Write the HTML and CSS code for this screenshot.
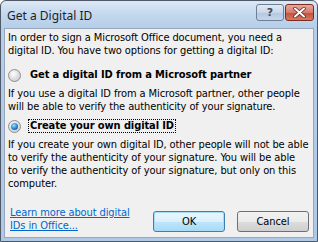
FILE: index.html
```html
<!DOCTYPE html>
<html lang="en">
<head>
    <meta charset="UTF-8">
    <title>Get a Digital ID</title>
    <link rel="stylesheet" href="styles.css">
</head>
<body>
    <div class="window">
        <div class="titlebar">
            <div class="title">Get a Digital ID</div>
            <div class="caption-buttons">
                <div class="cap-btn help">?</div>
                <div class="cap-btn close">
                    <svg width="13" height="11" viewBox="0 0 13 11">
                        <path d="M2 1.5 L11 9.5 M11 1.5 L2 9.5" stroke="#5a2020" stroke-width="3.4" stroke-linecap="round"/>
                        <path d="M2 1.5 L11 9.5 M11 1.5 L2 9.5" stroke="#ffffff" stroke-width="2" stroke-linecap="round"/>
                    </svg>
                </div>
            </div>
        </div>
        <div class="content">
            <p class="intro">In order to sign a Microsoft Office document, you need a<br>digital ID. You have two options for getting a digital ID:</p>

            <div class="option">
                <span class="radio"></span>
                <span class="option-label">Get a digital ID from a Microsoft partner</span>
            </div>
            <p class="desc">If you use a digital ID from a Microsoft partner, other people<br>will be able to verify the authenticity of your signature.</p>

            <div class="option">
                <span class="radio checked"></span>
                <span class="option-label focused">Create your own digital ID</span>
            </div>
            <p class="desc">If you create your own digital ID, other people will not be able<br>to verify the authenticity of your signature. You will be able<br>to verify the authenticity of your signature, but only on this<br>computer.</p>

            <div class="footer">
                <a class="learn" href="#">Learn more about digital<br>IDs in Office...</a>
                <div class="buttons">
                    <button class="btn default">OK</button>
                    <button class="btn">Cancel</button>
                </div>
            </div>
        </div>
    </div>
</body>
</html>
```

FILE: styles.css
```css
html, body {
    margin: 0;
    padding: 0;
    background: #ffffff;
}

.window {
    width: 318px;
    height: 242px;
    box-sizing: border-box;
    border: 1px solid #4e5866;
    border-radius: 6px 6px 0 0;
    background: linear-gradient(to bottom, #dce8f5 0px, #c2d7ee 14px, #b5cde8 28px, #aec8e6 100%);
    padding: 0 3px 3px 3px;
    display: flex;
    flex-direction: column;
    font-family: "DejaVu Sans Condensed", "DejaVu Sans", sans-serif;
    font-size: 11px;
    letter-spacing: -0.1px;
    color: #000000;
}

.titlebar {
    height: 27px;
    display: flex;
    justify-content: space-between;
    align-items: flex-start;
}

.title {
    font-family: "Noto Sans", sans-serif;
    font-size: 12px;
    letter-spacing: 0;
    padding: 6px 0 0 3px;
    color: #1e1e1e;
}

.caption-buttons {
    display: flex;
    gap: 1px;
    margin-top: 3px;
}

.cap-btn {
    height: 17px;
    box-sizing: border-box;
    border: 1px solid #6d7f95;
    border-radius: 3px;
    display: flex;
    align-items: center;
    justify-content: center;
}

.help {
    width: 28px;
    background: linear-gradient(to bottom, #e2ebf5 0%, #c8d7e8 50%, #b3c7de 51%, #c4d6eb 100%);
    font-family: "DejaVu Sans", sans-serif;
    font-weight: bold;
    font-size: 11px;
    color: #3d4a5c;
}

.close {
    width: 29px;
    border-color: #7a2b22;
    background: linear-gradient(to bottom, #e7a99e 0%, #d77a6a 50%, #c24f3a 51%, #d67a5f 100%);
}

.content {
    flex: 1;
    background: #f0f0f0;
    border: 1px solid #97a8bd;
    padding: 2px 2px 0 3px;
    line-height: 13px;
    white-space: nowrap;
    display: flex;
    flex-direction: column;
}

p {
    margin: 0;
}

.intro {
    margin-bottom: 10px;
}

.option {
    display: flex;
    align-items: center;
    height: 16px;
    margin-bottom: 4px;
}

.radio {
    width: 13px;
    height: 13px;
    box-sizing: border-box;
    border-radius: 50%;
    border: 1px solid #8e8f8f;
    background: radial-gradient(circle at 40% 35%, #ffffff 0%, #dcdcdc 55%, #c4c4c4 100%);
    margin-right: 7px;
    position: relative;
}

.radio.checked::after {
    content: '';
    position: absolute;
    left: 2px;
    top: 2px;
    width: 7px;
    height: 7px;
    border-radius: 50%;
    background: radial-gradient(circle at 40% 35%, #9fe3ff 0%, #2a8ad4 50%, #0d3f7a 100%);
}

.option-label {
    font-weight: bold;
    line-height: 12px;
    padding: 0 1px;
    border: 1px dotted transparent;
}

.option-label.focused {
    border-color: #000000;
}

.desc {
    margin-bottom: 5px;
}

.footer {
    display: flex;
    justify-content: space-between;
    align-items: flex-start;
    margin-top: 11px;
}

.learn {
    color: #0066cc;
    padding-left: 2px;
}

.buttons {
    display: flex;
    gap: 12px;
    margin-top: 5px;
    margin-right: 2px;
}

.btn {
    width: 72px;
    height: 21px;
    font-family: inherit;
    font-size: 11px;
    letter-spacing: inherit;
    color: #000000;
    border: 1px solid #707070;
    border-radius: 3px;
    background: linear-gradient(to bottom, #f2f2f2 0%, #ebebeb 50%, #dddddd 51%, #cfcfcf 100%);
    padding: 0;
}

.btn.default {
    border-color: #3c7fb1;
    box-shadow: inset 0 0 0 1px #a8dcf5;
    background: linear-gradient(to bottom, #eaf6fd 0%, #d9f0fc 50%, #bee6fd 51%, #a7d9f5 100%);
}
```
